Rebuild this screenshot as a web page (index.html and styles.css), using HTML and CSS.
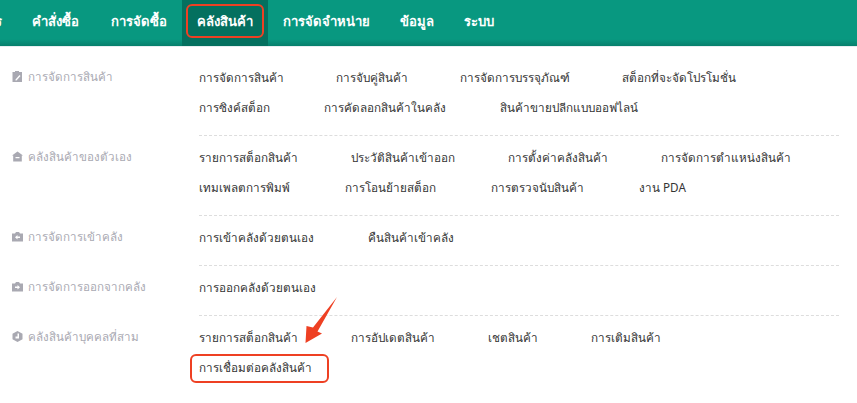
FILE: index.html
```html
<!DOCTYPE html>
<html lang="th">
<head>
    <meta charset="UTF-8">
    <title>คลังสินค้า</title>
    <link rel="stylesheet" href="styles.css">
</head>
<body>
    <nav class="topbar">
        <a class="nav-cut">การ</a>
        <a class="nav-item first">คำสั่งซื้อ</a>
        <a class="nav-item">การจัดซื้อ</a>
        <a class="nav-item active">คลังสินค้า</a>
        <a class="nav-item">การจัดจำหน่าย</a>
        <a class="nav-item">ข้อมูล</a>
        <a class="nav-item">ระบบ</a>
    </nav>

    <div class="menu">
        <section class="group">
            <div class="group-title">
                <svg class="group-icon" viewBox="0 0 11 11"><path fill-rule="evenodd" d="M0.500 1H3V0H7V1H10V11H0.500zM7.500 4 3.500 8.500V9.500H4.500L8.500 5z"/></svg>
                การจัดการสินค้า
            </div>
            <div class="links">
                <div class="link-row tight">
                    <a>การจัดการสินค้า</a>
                    <a>การจับคู่สินค้า</a>
                    <a>การจัดการบรรจุภัณฑ์</a>
                    <a>สต็อกที่จะจัดโปรโมชั่น</a>
                </div>
                <div class="link-row">
                    <a>การซิงค์สต็อก</a>
                    <a>การคัดลอกสินค้าในคลัง</a>
                    <a>สินค้าขายปลีกแบบออฟไลน์</a>
                </div>
            </div>
        </section>

        <section class="group">
            <div class="group-title">
                <svg class="group-icon" viewBox="0 0 11 11"><path fill-rule="evenodd" d="M5.500 0.500 11 4.500H9.800V10.500H1.200V4.500H0zM3.500 6V7.200H7.500V6z"/></svg>
                คลังสินค้าของตัวเอง
            </div>
            <div class="links">
                <div class="link-row snug">
                    <a>รายการสต็อกสินค้า</a>
                    <a>ประวัติสินค้าเข้าออก</a>
                    <a>การตั้งค่าคลังสินค้า</a>
                    <a>การจัดการตำแหน่งสินค้า</a>
                </div>
                <div class="link-row wide">
                    <a>เทมเพลตการพิมพ์</a>
                    <a>การโอนย้ายสต็อก</a>
                    <a>การตรวจนับสินค้า</a>
                    <a>งาน PDA</a>
                </div>
            </div>
        </section>

        <section class="group">
            <div class="group-title">
                <svg class="group-icon" viewBox="0 0 11 11"><path fill-rule="evenodd" d="M0 2.500H3L4 1H7L8 2.500H11V10.500H0zM5.500 4 3 6.200 5.500 8.400V7H8V5.400H5.500z"/></svg>
                การจัดการเข้าคลัง
            </div>
            <div class="links">
                <div class="link-row">
                    <a>การเข้าคลังด้วยตนเอง</a>
                    <a>คืนสินค้าเข้าคลัง</a>
                </div>
            </div>
        </section>

        <section class="group">
            <div class="group-title">
                <svg class="group-icon" viewBox="0 0 11 11"><path fill-rule="evenodd" d="M0 2.500H3L4 1H7L8 2.500H11V10.500H0zM5.500 4 8 6.200 5.500 8.400V7H3V5.400H5.500z"/></svg>
                การจัดการออกจากคลัง
            </div>
            <div class="links">
                <div class="link-row">
                    <a>การออกคลังด้วยตนเอง</a>
                </div>
            </div>
        </section>

        <section class="group">
            <div class="group-title">
                <svg class="group-icon" viewBox="0 0 11 11"><path fill-rule="evenodd" d="M5.500 0 10.500 2.700V8.300L5.500 11 0.500 8.300V2.700zM5.500 2.500H7V7.500H3.500V5.500H5.500z"/></svg>
                คลังสินค้าบุคคลที่สาม
            </div>
            <div class="links">
                <div class="link-row snug">
                    <a>รายการสต็อกสินค้า</a>
                    <a>การอัปเดตสินค้า</a>
                    <a>เชตสินค้า</a>
                    <a>การเติมสินค้า</a>
                </div>
                <div class="link-row">
                    <a class="marked">การเชื่อมต่อคลังสินค้า</a>
                </div>
            </div>
        </section>
    </div>

    <svg class="arrow" viewBox="0 0 34 48"><path d="M33 1 13.500 35.500 18 37.500 1.500 47 2.500 30 9 31.500z"/></svg>
</body>
</html>
```

FILE: styles.css
```css
body {
    font-family: "Noto Sans", "Liberation Sans", sans-serif;
    margin: 0;
    background-color: white;
    color: #333;
    height: 403px;
    overflow: hidden;
    position: relative;
}

.topbar {
    display: flex;
    height: 46px;
    background: linear-gradient(#089880 85%, #067f6c);
    border-bottom: 1px solid #e6eef0;
    font-size: 13.1px;
    font-weight: bold;
    color: #fff;
}

.topbar a {
    display: flex;
    align-items: center;
    height: 46px;
    padding-bottom: 4px;
    box-sizing: border-box;
}

.nav-cut {
    width: 17px;
    justify-content: flex-end;
    overflow: hidden;
    padding-right: 15px;
    flex-shrink: 0;
}

.nav-item {
    padding: 0 15px;
}

.nav-item.first {
    padding-right: 17px;
}

.nav-item.active {
    position: relative;
    background-color: #04705f;
}

.nav-item.active::after {
    content: "";
    position: absolute;
    left: 4px;
    right: 4px;
    top: 4px;
    height: 30px;
    border: 2px solid #ee4023;
    border-radius: 6px;
}

.menu {
    padding: 9px 18px 0 12px;
}

.group {
    display: flex;
    padding-top: 6px;
}

.group-title {
    width: 187px;
    flex-shrink: 0;
    display: flex;
    align-items: flex-start;
    gap: 5px;
    line-height: 30px;
    font-size: 11.6px;
    color: #a9a9b2;
}

.group-icon {
    width: 11px;
    height: 11px;
    margin-top: 9px;
    fill: #a9a9b2;
    flex-shrink: 0;
}

.links {
    flex: 1;
    border-bottom: 1px dashed #ddd;
    padding-bottom: 13px;
}

.group:last-child .links {
    border-bottom: none;
}

.link-row {
    display: flex;
    gap: 54px;
    height: 30px;
    line-height: 30px;
    font-size: 11.7px;
    color: #333;
}

.link-row.tight {
    gap: 52px;
}

.link-row.snug {
    gap: 53px;
}

.link-row.wide {
    gap: 55px;
}

.marked {
    position: relative;
}

.marked::after {
    content: "";
    position: absolute;
    left: -9px;
    right: -17px;
    top: 2px;
    height: 25px;
    border: 2px solid #ee4023;
    border-radius: 6px;
}

.arrow {
    position: absolute;
    left: 304px;
    top: 296px;
    width: 34px;
    height: 48px;
    fill: #ee4023;
}
```
